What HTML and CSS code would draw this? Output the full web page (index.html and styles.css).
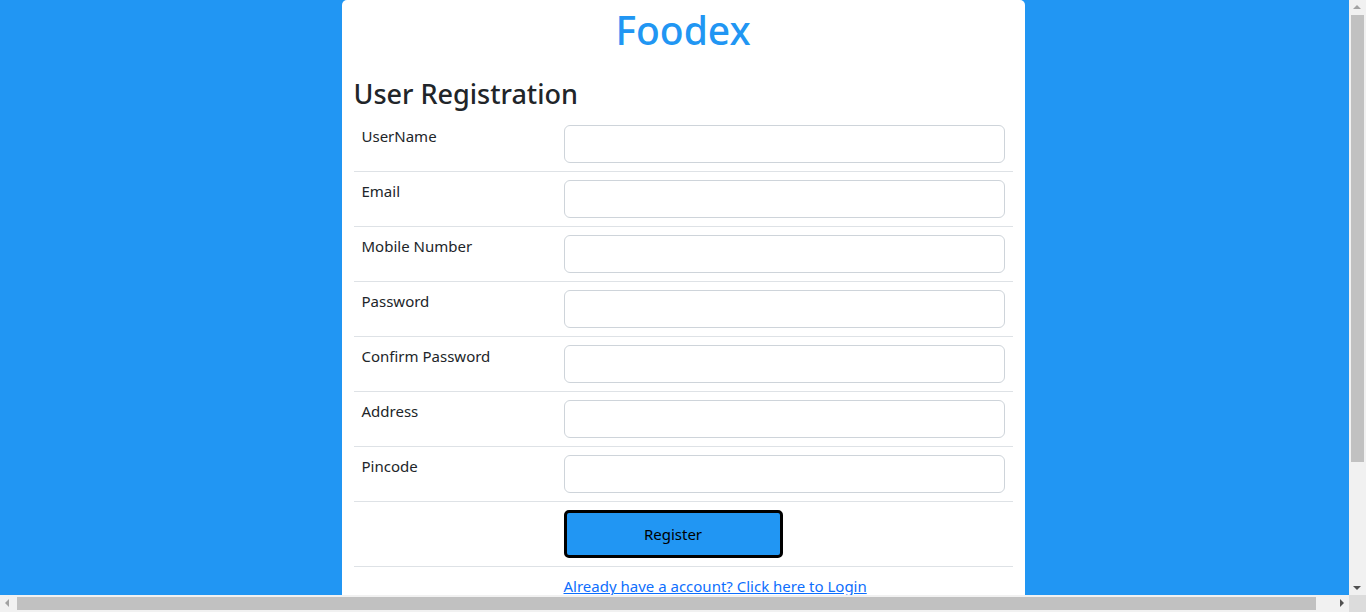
FILE: index.html
```html
<!DOCTYPE html>
<html lang="en">
<head>
<meta charset="utf-8">
<title>Foodex - User Registration</title>
<link rel="stylesheet" href="styles.css">
</head>
<body>
<div class="page">
  <div class="card">
    <h1 class="brand">Foodex</h1>
    <h2 class="title">User Registration</h2>
    <table class="form-table">
      <tr><td class="label">UserName</td><td class="field"><input class="input" type="text"></td></tr>
      <tr><td class="label">Email</td><td class="field"><input class="input" type="email"></td></tr>
      <tr><td class="label">Mobile Number</td><td class="field"><input class="input" type="text"></td></tr>
      <tr><td class="label">Password</td><td class="field"><input class="input" type="password"></td></tr>
      <tr><td class="label">Confirm Password</td><td class="field"><input class="input" type="password"></td></tr>
      <tr><td class="label">Address</td><td class="field"><input class="input" type="text"></td></tr>
      <tr><td class="label">Pincode</td><td class="field"><input class="input" type="text"></td></tr>
      <tr><td class="label"></td><td class="field"><button class="btn" type="button">Register</button></td></tr>
      <tr class="last"><td class="label"></td><td class="field"><a class="login" href="#">Already have a account? Click here to Login</a></td></tr>
    </table>
  </div>
</div>
<div class="vscroll" aria-hidden="true">
  <span class="arrow up"></span>
  <span class="vthumb"></span>
  <span class="arrow down"></span>
</div>
<div class="hscroll" aria-hidden="true">
  <span class="arrow left"></span>
  <span class="hthumb"></span>
  <span class="arrow right"></span>
</div>
<div class="corner" aria-hidden="true"></div>
</body>
</html>
```
FILE: styles.css
```css
html, body {
  margin: 0;
  padding: 0;
}
body {
  background: #2196f3;
  font-family: "Noto Sans", "Open Sans", sans-serif;
  font-size: 15px;
  line-height: 1.5;
  color: #212529;
}
.page {
  width: 100vw;
  padding-bottom: 100px;
}
.card {
  width: 50%;
  margin: 0 auto;
  background: #fff;
  border-radius: 5px;
  padding: 7px 12px 16px;
  box-sizing: border-box;
}
.brand {
  margin: 0 0 8px;
  text-align: center;
  color: #2196f3;
  font-size: 39px;
  font-weight: 500;
  line-height: 1.2;
}
.title {
  margin: 24px 0 7px;
  font-size: 27px;
  font-weight: 500;
  line-height: 1.2;
  color: #212529;
}
.form-table {
  width: 100%;
  border-collapse: collapse;
}
.form-table tr {
  border-bottom: 1px solid #dee2e6;
}
.form-table tr.last {
  border-bottom: 0;
}
.form-table td {
  padding: 8px;
  vertical-align: top;
}
.label {
  width: 186px;
}
.input {
  display: block;
  width: 100%;
  height: 38px;
  box-sizing: border-box;
  border: 1px solid #ced4da;
  border-radius: 6px;
  background: #fff;
  margin: 0;
  padding: 6px 12px;
  font: inherit;
}
.btn {
  display: block;
  width: 219px;
  height: 48px;
  box-sizing: border-box;
  background: #2196f3;
  border: 3px solid #000;
  border-radius: 5px;
  color: #000;
  font: inherit;
  margin: 0;
  padding: 0;
}
.login {
  color: #0d6efd;
  text-decoration: underline;
}

/* scrollbar chrome overlay */
.vscroll {
  position: fixed;
  top: 0;
  right: 0;
  width: 17px;
  height: 595px;
  background: #f1f1f1;
}
.vthumb {
  position: absolute;
  left: 2px;
  top: 15px;
  width: 13px;
  height: 447px;
  background: #c1c1c1;
}
.hscroll {
  position: fixed;
  left: 0;
  bottom: 0;
  width: 1349px;
  height: 17px;
  background: #f1f1f1;
}
.hthumb {
  position: absolute;
  left: 17px;
  top: 2px;
  width: 1299px;
  height: 13px;
  background: #c1c1c1;
}
.corner {
  position: fixed;
  right: 0;
  bottom: 0;
  width: 17px;
  height: 17px;
  background: #dcdcdc;
}
.arrow {
  position: absolute;
  width: 0;
  height: 0;
  border-style: solid;
}
.arrow.up {
  left: 4px;
  top: 5px;
  border-width: 0 4px 4px 4px;
  border-color: transparent transparent #a3a3a3 transparent;
}
.arrow.down {
  left: 4px;
  bottom: 5px;
  border-width: 4px 4px 0 4px;
  border-color: #505050 transparent transparent transparent;
}
.arrow.left {
  left: 5px;
  top: 4px;
  border-width: 4px 4px 4px 0;
  border-color: transparent #a3a3a3 transparent transparent;
}
.arrow.right {
  right: 5px;
  top: 4px;
  border-width: 4px 0 4px 4px;
  border-color: transparent transparent transparent #505050;
}
```
